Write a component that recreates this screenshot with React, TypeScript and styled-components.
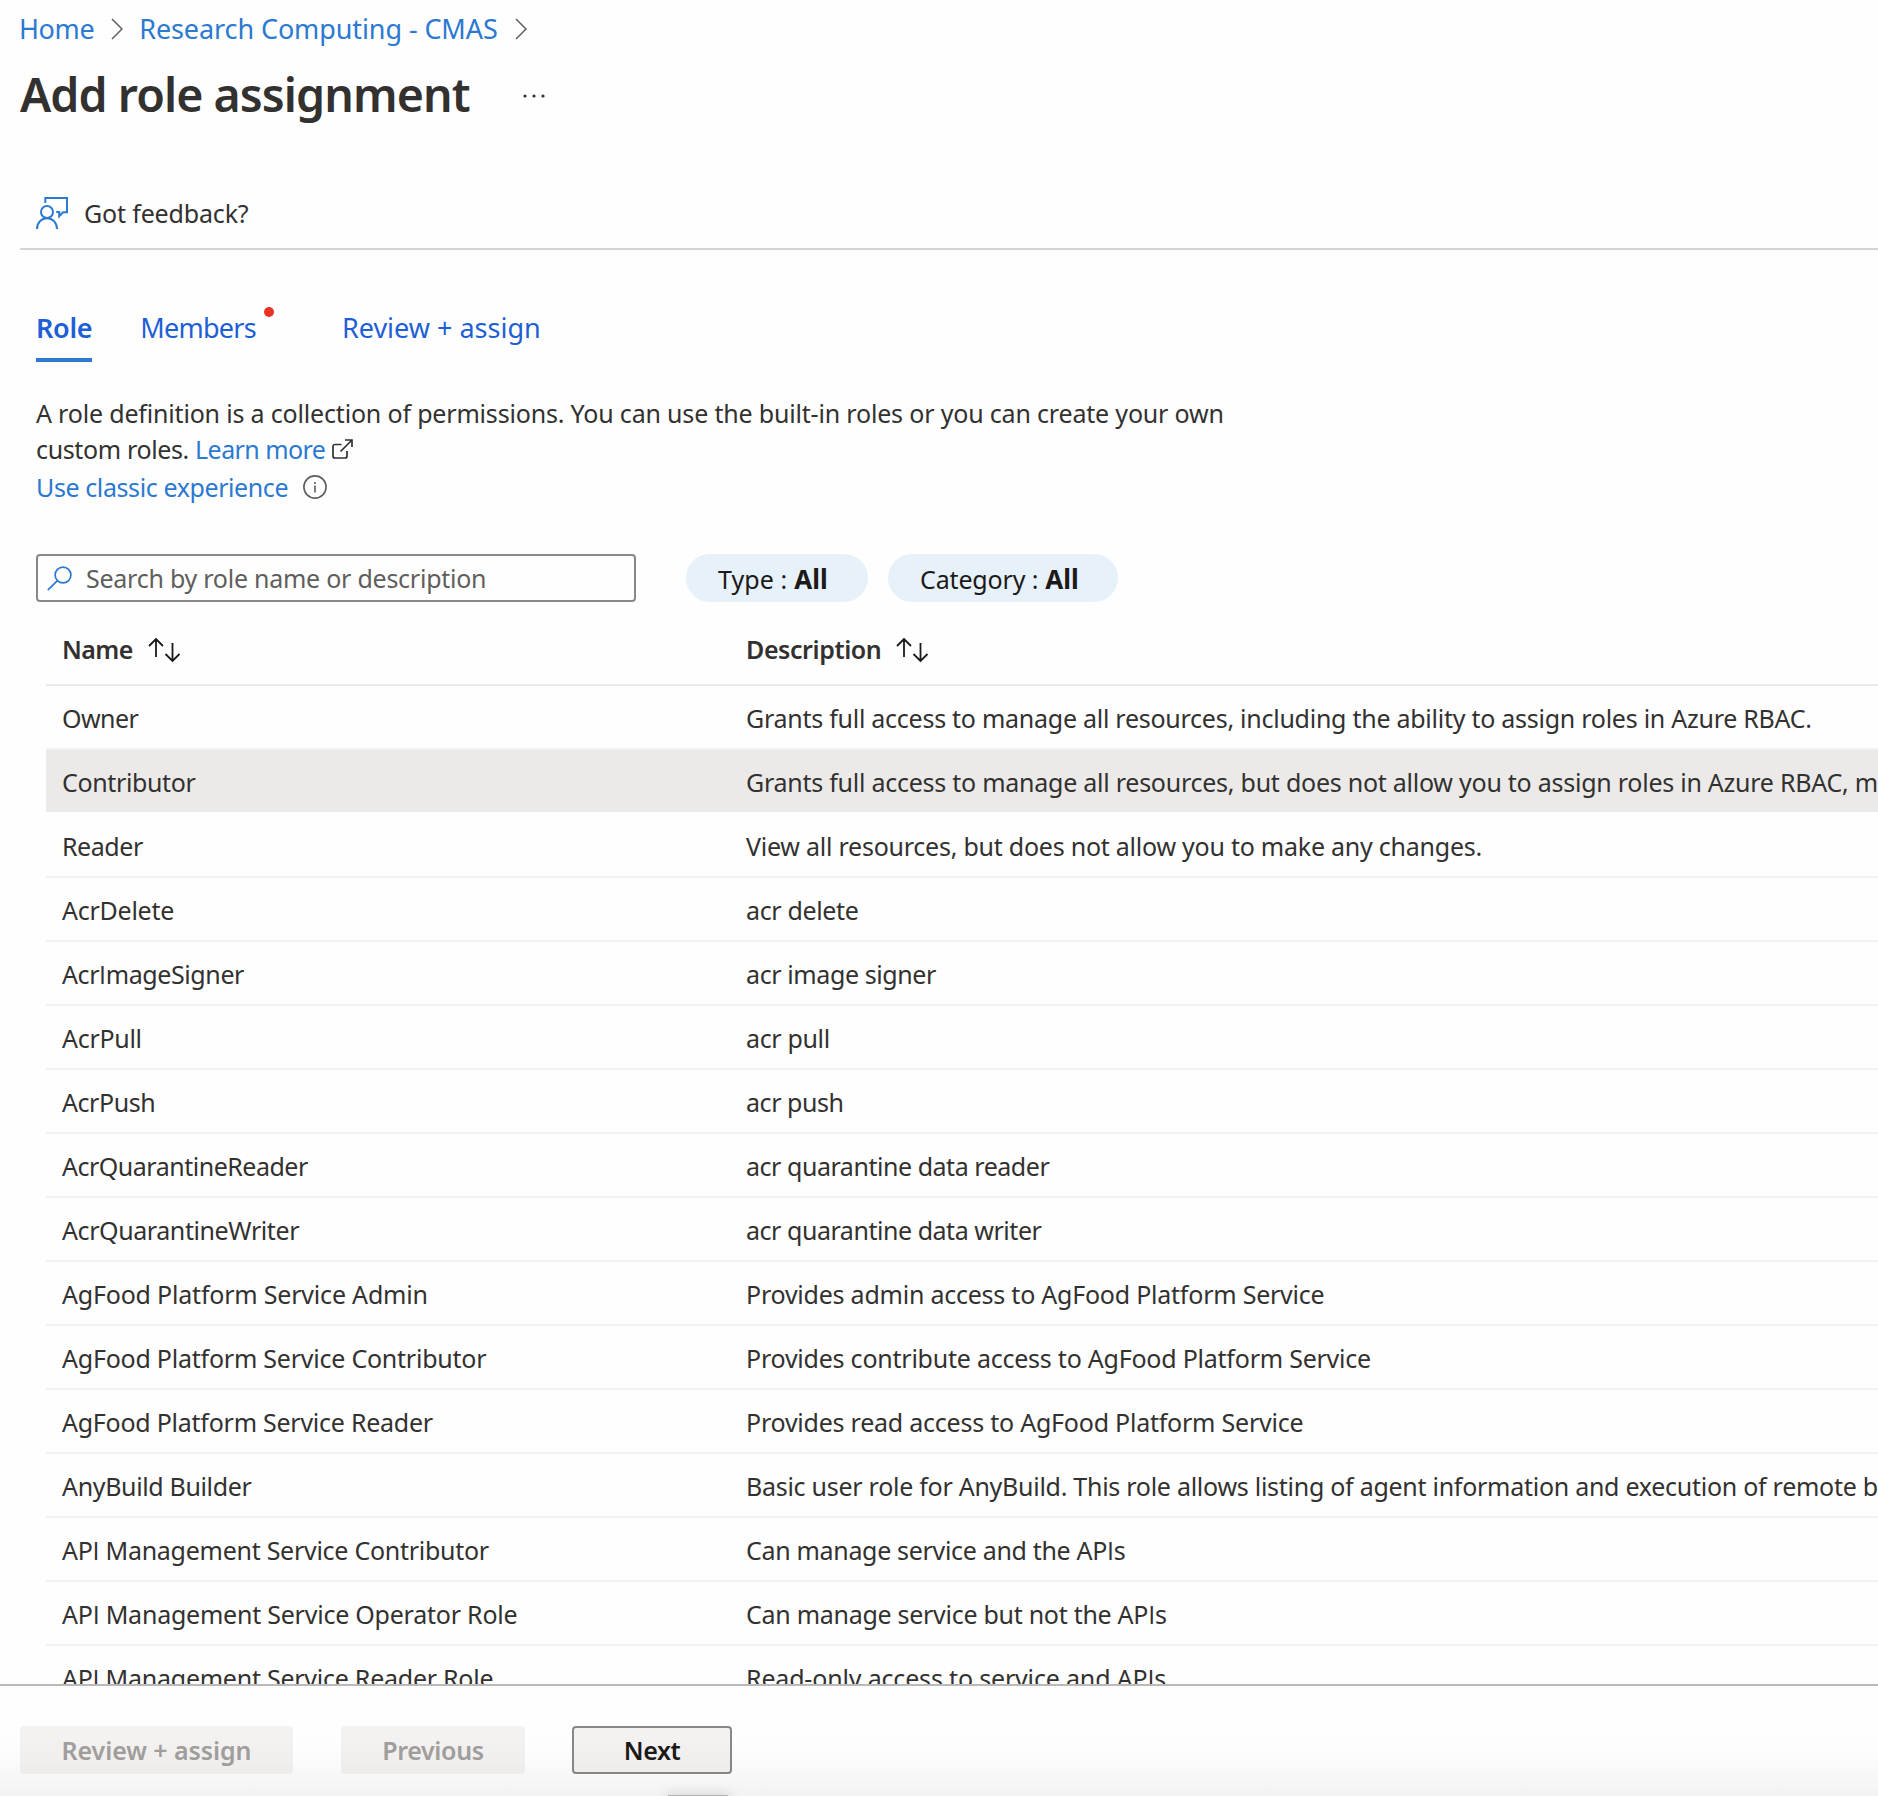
import React from 'react';
import styled, { createGlobalStyle } from 'styled-components';

const GlobalStyle = createGlobalStyle`
  *, *::before, *::after { box-sizing: border-box; }
  html, body { margin: 0; padding: 0; background: #fefefe; }
  body { overflow: hidden; }
`;

const Page = styled.div`
  position: relative;
  display: flex;
  flex-direction: column;
  width: 1878px;
  height: 1796px;
  overflow: hidden;
  background: #fefefe;
  color: #323130;
  font-family: 'Noto Sans', 'Open Sans', sans-serif;
  font-size: 25px;
  line-height: 36px;
  white-space: nowrap;
`;

const Text = styled.span<{ $tracking?: number }>`
  letter-spacing: ${(p) => p.$tracking ?? -0.25}px;
`;

const PlainCapital = styled.span`
  font-family: 'Open Sans', sans-serif;
  line-height: 1;
`;

const Link = styled.a<{ $tracking?: number }>`
  color: #2b79d0;
  text-decoration: none;
  letter-spacing: ${(p) => p.$tracking ?? 0}px;
`;

const Breadcrumb = styled.nav`
  display: flex;
  align-items: center;
  height: 57px;
  padding-left: 19px;
  font-size: 27px;
  flex: none;
`;

const Chevron = styled.svg`
  width: 12px;
  height: 22px;
  margin: 1px 16px 0 17px;
  fill: none;
  stroke: #605e5c;
  stroke-width: 1.5;
`;

const TitleBar = styled.header`
  display: flex;
  align-items: center;
  gap: 53px;
  height: 74px;
  padding-left: 20px;
  flex: none;
`;

const Title = styled.h1`
  margin: 0;
  font-size: 46.5px;
  font-weight: 600;
  line-height: 74px;
  letter-spacing: -0.93px;
`;

const MoreDots = styled.svg`
  width: 22px;
  height: 4px;
  margin-top: 4px;
  fill: #323130;
`;

const CommandBar = styled.div`
  display: flex;
  align-items: center;
  gap: 16px;
  height: 72px;
  margin: 47px 0 0 20px;
  padding-left: 16px;
  border-bottom: 2px solid #d4d4d4;
  flex: none;
`;

const FeedbackIcon = styled.svg`
  width: 32px;
  height: 32px;
  fill: none;
  stroke: #2b79d0;
  stroke-width: 2;
`;

const Tabs = styled.div`
  display: flex;
  margin: 46px 0 0 36px;
  font-size: 27px;
  flex: none;
`;

const Tab = styled.div<{ $active?: boolean; $tracking?: number; $gap?: number }>`
  position: relative;
  height: 66px;
  padding-top: 1px;
  line-height: 62px;
  margin-right: ${(p) => p.$gap ?? 0}px;
  color: #1f5fd6;
  font-weight: ${(p) => (p.$active ? 600 : 400)};
  letter-spacing: ${(p) => p.$tracking ?? 0}px;
  border-bottom: 4px solid ${(p) => (p.$active ? '#2b79d0' : 'transparent')};
`;

const AlertDot = styled.span`
  position: absolute;
  top: 11px;
  right: -18px;
  width: 10px;
  height: 10px;
  border-radius: 50%;
  background: #e93223;
`;

const Intro = styled.section`
  display: flex;
  flex-direction: column;
  margin: 33px 0 0 36px;
  flex: none;
`;

const Line = styled.div<{ $top?: number }>`
  display: flex;
  align-items: center;
  height: 36px;
  margin-top: ${(p) => p.$top ?? 0}px;
`;

const ExternalIcon = styled.svg`
  width: 21px;
  height: 20px;
  margin: 0 0 0 7px;
  fill: none;
  stroke: #323130;
  stroke-width: 1.7;
`;

const InfoIcon = styled.svg`
  width: 24px;
  height: 24px;
  margin-left: 15px;
  fill: none;
  stroke: #605e5c;
  stroke-width: 1.6;
`;

const Filters = styled.div`
  display: flex;
  margin: 49px 0 0 36px;
  flex: none;
`;

const SearchBox = styled.div`
  display: flex;
  align-items: center;
  gap: 14px;
  width: 600px;
  height: 48px;
  margin-right: 50px;
  padding-left: 9px;
  border: 2px solid #8a8886;
  border-radius: 4px;
  color: #605e5c;
`;

const SearchIcon = styled.svg`
  width: 25px;
  height: 25px;
  fill: none;
  stroke: #2b79d0;
  stroke-width: 1.7;
`;

const Pill = styled.button<{ $width: number }>`
  display: flex;
  gap: 7px;
  width: ${(p) => p.$width}px;
  height: 48px;
  margin: 0 20px 0 0;
  padding: 1px 0 0 32px;
  border: 0;
  border-radius: 24px;
  background: #e7f1fa;
  color: #1b1a19;
  font: inherit;
  line-height: 48px;
`;

const PillValue = styled.b`
  font-size: 26px;
  font-weight: 700;
`;

const Table = styled.div`
  display: flex;
  flex-direction: column;
  flex: 1;
  min-height: 0;
  margin-left: 46px;
  overflow: hidden;
`;

const HeaderRow = styled.div`
  display: grid;
  grid-template-columns: 684px 1fr;
  height: 84px;
  padding: 12px 0 0 16px;
  border-bottom: 2px solid #eaeaea;
  font-weight: 600;
  flex: none;
`;

const HeaderCell = styled.div`
  display: flex;
  align-items: center;
  gap: 15px;
`;

const SortIcon = styled.svg`
  width: 33px;
  height: 26px;
  margin-top: 2px;
  fill: none;
  stroke: #1b1a19;
  stroke-width: 1.8;
`;

const Row = styled.div<{ $hover?: boolean }>`
  display: grid;
  grid-template-columns: 684px 1fr;
  align-items: center;
  height: 64px;
  padding: 2px 0 0 16px;
  background: ${(p) => (p.$hover ? '#ebeae9' : 'transparent')};
  background-clip: padding-box;
  border-bottom: 2px solid ${(p) => (p.$hover ? 'transparent' : '#f2f2f1')};
  flex: none;
`;

const Footer = styled.footer`
  display: flex;
  align-items: flex-start;
  height: 112px;
  padding: 40px 0 0 20px;
  border-top: 2px solid #bababa;
  flex: none;
`;

const Button = styled.button<{ $width: number; $gap: number; $primary?: boolean; $tracking: number }>`
  width: ${(p) => p.$width}px;
  height: 48px;
  margin: 0 ${(p) => p.$gap}px 0 0;
  padding: 0;
  border: 2px solid ${(p) => (p.$primary ? '#8a8886' : '#f3f2f1')};
  border-radius: 4px;
  background: #f3f2f1;
  color: ${(p) => (p.$primary ? '#1b1a19' : '#a19f9d')};
  font: inherit;
  font-weight: 600;
  line-height: 44px;
  letter-spacing: ${(p) => p.$tracking}px;
`;

const BottomShade = styled.div`
  position: absolute;
  left: 0;
  right: 0;
  bottom: 0;
  height: 60px;
  background: linear-gradient(rgba(0, 0, 0, 0), rgba(0, 0, 0, 0.015) 45%, rgba(0, 0, 0, 0.045));
  pointer-events: none;
`;

const DockEdge = styled.div`
  position: absolute;
  left: 668px;
  bottom: 0;
  width: 60px;
  height: 1px;
  background: #b4b4b4;
  box-shadow: 0 2px 12px 2px rgba(0, 0, 0, 0.22);
`;

const BreadcrumbChevron = () => (
  <Chevron viewBox="0 0 12 22">
    <path d="M1 1l10 10L1 21" />
  </Chevron>
);

const Sort = () => (
  <SortIcon viewBox="0 0 33 26">
    <path d="M8 20V2M1 9l7-7 7 7M24.5 6v18M17.5 17l7 7 7-7" />
  </SortIcon>
);

/* Sets every capital I without serifs; the rest of the text keeps the base face. */
const CellText = ({ children, tracking }: { children: string; tracking?: number }) => (
  <Text $tracking={tracking}>
    {children.split('I').map((part, i) => (
      <React.Fragment key={i}>
        {i > 0 && <PlainCapital>I</PlainCapital>}
        {part}
      </React.Fragment>
    ))}
  </Text>
);

type Role = { name: string; description: string; nameTracking?: number; descTracking?: number };

const roles: Role[] = [
  {
    name: 'Owner',
    description: 'Grants full access to manage all resources, including the ability to assign roles in Azure RBAC.',
    nameTracking: -0.55,
    descTracking: -0.26,
  },
  {
    name: 'Contributor',
    description:
      'Grants full access to manage all resources, but does not allow you to assign roles in Azure RBAC, manage assignments in Azure Blueprints, or share image galleries.',
    nameTracking: -0.36,
  },
  {
    name: 'Reader',
    description: 'View all resources, but does not allow you to make any changes.',
    nameTracking: -0.45,
    descTracking: -0.24,
  },
  { name: 'AcrDelete', description: 'acr delete', descTracking: -0.35 },
  { name: 'AcrImageSigner', description: 'acr image signer', nameTracking: -0.4, descTracking: -0.4 },
  { name: 'AcrPull', description: 'acr pull', nameTracking: -0.3, descTracking: -0.35 },
  { name: 'AcrPush', description: 'acr push', nameTracking: -0.45, descTracking: -0.45 },
  { name: 'AcrQuarantineReader', description: 'acr quarantine data reader', nameTracking: -0.49, descTracking: -0.46 },
  { name: 'AcrQuarantineWriter', description: 'acr quarantine data writer', nameTracking: -0.41, descTracking: -0.46 },
  {
    name: 'AgFood Platform Service Admin',
    description: 'Provides admin access to AgFood Platform Service',
    nameTracking: -0.2,
    descTracking: -0.23,
  },
  {
    name: 'AgFood Platform Service Contributor',
    description: 'Provides contribute access to AgFood Platform Service',
    nameTracking: -0.23,
    descTracking: -0.23,
  },
  {
    name: 'AgFood Platform Service Reader',
    description: 'Provides read access to AgFood Platform Service',
    descTracking: -0.23,
  },
  {
    name: 'AnyBuild Builder',
    description:
      'Basic user role for AnyBuild. This role allows listing of agent information and execution of remote build capabilities.',
    nameTracking: -0.35,
    descTracking: -0.27,
  },
  {
    name: 'API Management Service Contributor',
    description: 'Can manage service and the APIs',
    nameTracking: -0.27,
    descTracking: -0.32,
  },
  {
    name: 'API Management Service Operator Role',
    description: 'Can manage service but not the APIs',
    nameTracking: -0.23,
    descTracking: -0.28,
  },
  {
    name: 'API Management Service Reader Role',
    description: 'Read-only access to service and APIs',
    descTracking: -0.17,
  },
];

export default function App() {
  return (
    <Page>
      <GlobalStyle />
      <Breadcrumb>
        <Link $tracking={-0.4}>Home</Link>
        <BreadcrumbChevron />
        <Link $tracking={-0.1}>Research Computing - CMAS</Link>
        <BreadcrumbChevron />
      </Breadcrumb>

      <TitleBar>
        <Title>Add role assignment</Title>
        <MoreDots viewBox="0 0 22 4">
          <circle cx="2" cy="2" r="1.6" />
          <circle cx="11" cy="2" r="1.6" />
          <circle cx="20" cy="2" r="1.6" />
        </MoreDots>
      </TitleBar>

      <CommandBar>
        <FeedbackIcon viewBox="0 0 32 32">
          <path d="M9.3 6V1H31v14.3h-4l-3.8 4v-4.3h-3" />
          <circle cx="11" cy="15" r="6" />
          <path d="M1 32c0-6 4.200-10.700 10-10.700S21 26 21 32" />
        </FeedbackIcon>
        <Text $tracking={-0.16}>Got feedback?</Text>
      </CommandBar>

      <Tabs>
        <Tab $active $tracking={-0.3} $gap={48}>
          Role
        </Tab>
        <Tab $tracking={-0.75} $gap={86}>
          Members
          <AlertDot />
        </Tab>
        <Tab>Review + assign</Tab>
      </Tabs>

      <Intro>
        <Line>
          <Text $tracking={-0.18}>
            A role definition is a collection of permissions. You can use the built-in roles or you can create your own
          </Text>
        </Line>
        <Line>
          <Text $tracking={-0.36}>custom roles.&nbsp;</Text>
          <Link $tracking={-0.57}>Learn more</Link>
          <ExternalIcon viewBox="0 0 21 20">
            <path d="M9.5 5.5H3a2 2 0 0 0-2 2V17a2 2 0 0 0 2 2h10a2 2 0 0 0 2-2v-5M8.5 12.500L20 1M13 1h7v7" />
          </ExternalIcon>
        </Line>
        <Line $top={2}>
          <Link $tracking={-0.4}>Use classic experience</Link>
          <InfoIcon viewBox="0 0 24 24">
            <circle cx="12" cy="12" r="11.1" />
            <path d="M12 10.500V17.500M12 7v2" />
          </InfoIcon>
        </Line>
      </Intro>

      <Filters>
        <SearchBox>
          <SearchIcon viewBox="0 0 25 25">
            <circle cx="16" cy="9" r="7.9" />
            <path d="M10.400 14.600L0.800 24.200" />
          </SearchIcon>
          <Text $tracking={-0.25}>Search by role name or description</Text>
        </SearchBox>
        <Pill $width={182}>
          <Text $tracking={0.08}>Type :</Text>
          <PillValue>All</PillValue>
        </Pill>
        <Pill $width={230}>
          <Text $tracking={-0.15}>Category :</Text>
          <PillValue>All</PillValue>
        </Pill>
      </Filters>

      <Table>
        <HeaderRow>
          <HeaderCell>
            <Text $tracking={-0.6}>Name</Text>
            <Sort />
          </HeaderCell>
          <HeaderCell>
            <Text $tracking={-0.42}>Description</Text>
            <Sort />
          </HeaderCell>
        </HeaderRow>
        {roles.map((role) => (
          <Row key={role.name} $hover={role.name === 'Contributor'}>
            <CellText tracking={role.nameTracking}>{role.name}</CellText>
            <CellText tracking={role.descTracking}>{role.description}</CellText>
          </Row>
        ))}
      </Table>

      <Footer>
        <Button $width={273} $gap={48} $tracking={-0.08}>
          Review + assign
        </Button>
        <Button $width={184} $gap={47} $tracking={-0.37}>
          Previous
        </Button>
        <Button $width={160} $gap={0} $tracking={-0.4} $primary>
          Next
        </Button>
      </Footer>
      <BottomShade />
      <DockEdge />
    </Page>
  );
}
